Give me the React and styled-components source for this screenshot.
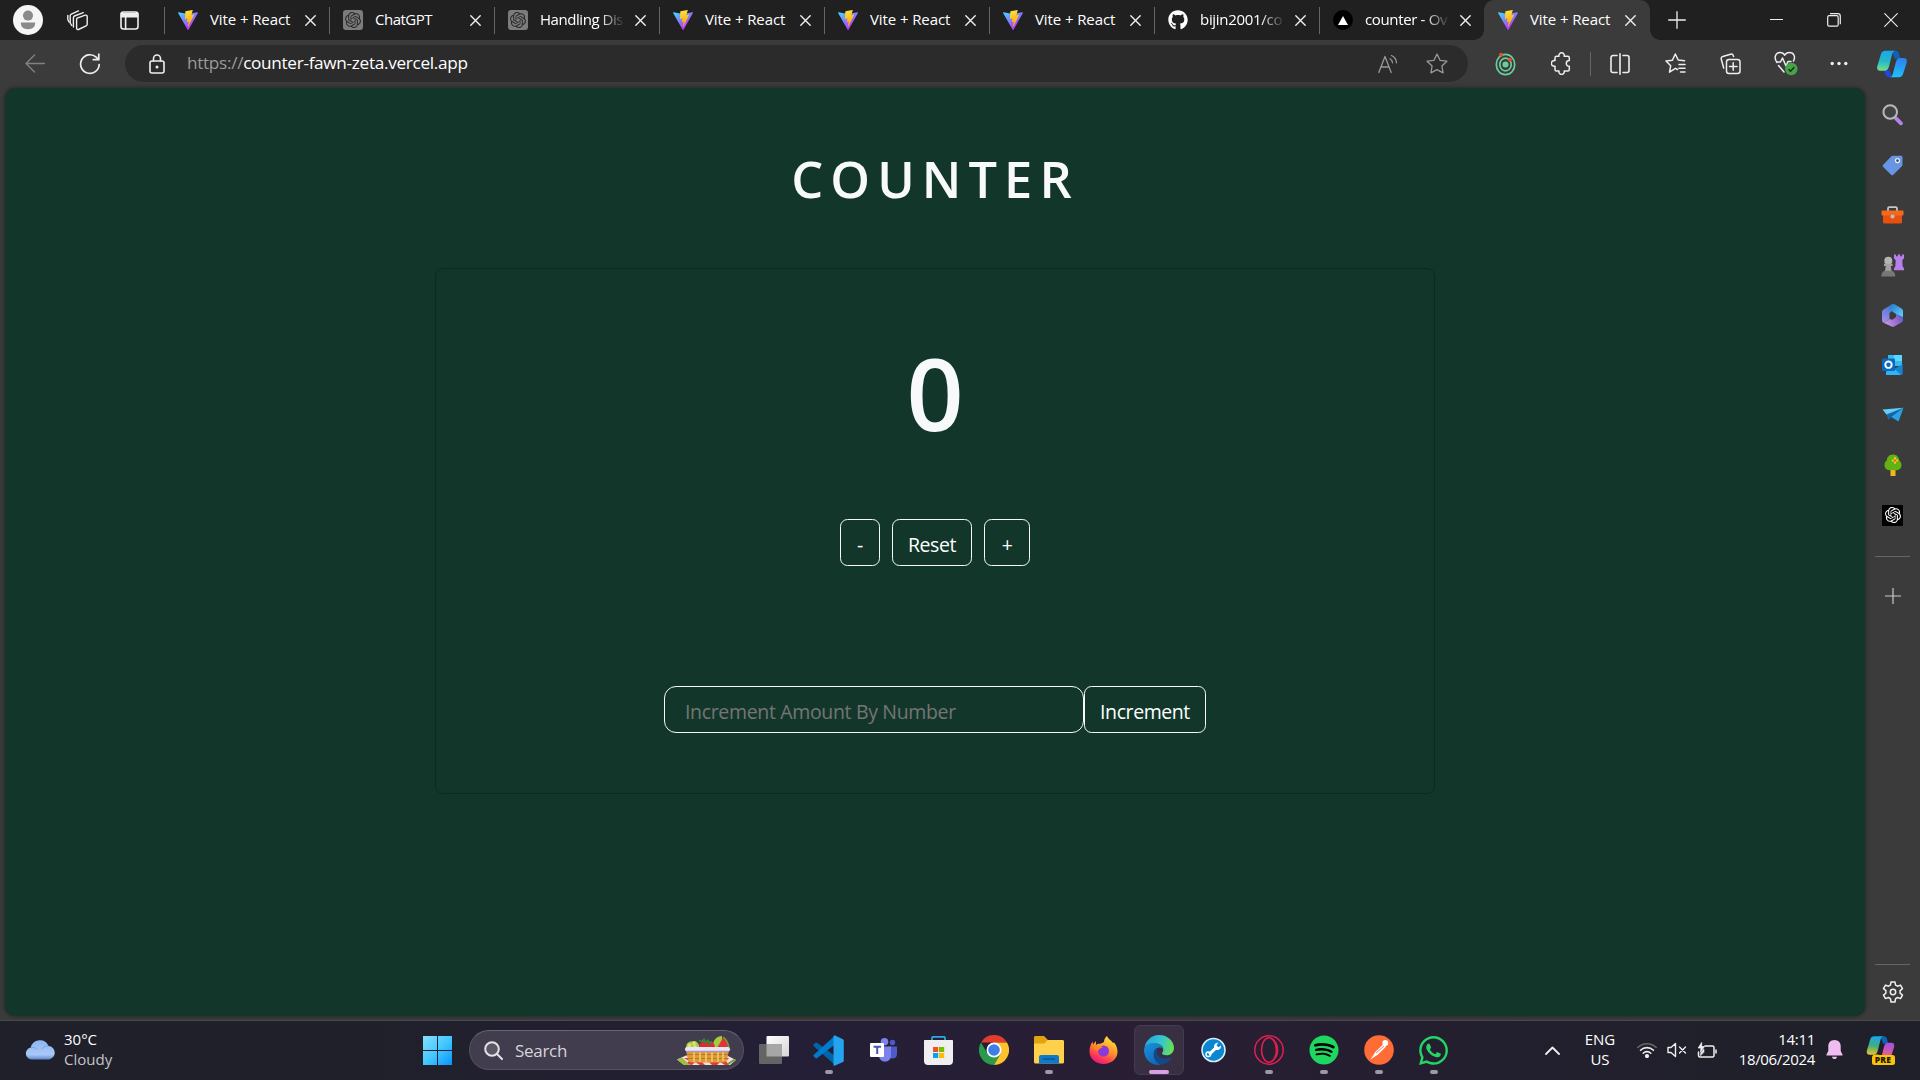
import React, { useState } from "react";
import styled, { createGlobalStyle, css } from "styled-components";
import { FaGithub, FaSpotify, FaWhatsapp } from "react-icons/fa";

const Global = createGlobalStyle`
  *, *::before, *::after { box-sizing: border-box; }
  body { margin: 0; background: #202020; overflow: hidden; }
  svg { display: block; flex: none; }
  button, input { font: inherit; color: inherit; }
`;

const Screen = styled.div`
  width: 1920px;
  height: 1080px;
  display: flex;
  flex-direction: column;
  background: #3b3b3b;
  color: #fff;
  font-family: "Open Sans", "Noto Sans", sans-serif;
`;

/* ---------- tab strip ---------- */
const TabStrip = styled.div`
  height: 40px;
  display: flex;
  background: #202020;
`;
const StripTools = styled.div`
  width: 164px;
  display: flex;
  align-items: center;
  padding-left: 13px;
`;
const Avatar = styled.div`
  width: 30px;
  height: 30px;
  margin-right: 24px;
  border-radius: 50%;
  background: #f5f5f5;
  overflow: hidden;
`;
const StripTool = styled.div`
  width: 21px;
  margin-right: ${(p) => p.$gap || 0}px;
`;
const Tab = styled.div`
  width: 165px;
  height: 40px;
  display: flex;
  align-items: center;
  padding-left: 13px;
  border-left: 1px solid transparent;
  position: relative;
  font-size: 15px;
  ${(p) =>
    p.$active
      ? css`
          width: 166px;
          background: #3b3b3b;
          border-radius: 10px 10px 0 0;
          &::before, &::after {
            content: "";
            position: absolute;
            bottom: 0;
            width: 10px;
            height: 10px;
          }
          &::before { left: -11px; background: radial-gradient(circle at 0 0, transparent 9.5px, #3b3b3b 10px); }
          &::after { right: -10px; background: radial-gradient(circle at 100% 0, transparent 9.5px, #3b3b3b 10px); }
        `
      : css`
          border-image: linear-gradient(transparent 8px, #666 8px, #666 33px, transparent 33px) 1;
        `}
`;
const TabIcon = styled.div`
  width: 20px;
  height: 20px;
  margin-right: 12px;
  border-radius: ${(p) => (p.$round ? "50%" : "3px")};
  background: ${(p) => p.$bg || "none"};
  display: grid;
  place-items: center;
`;
const TabTitle = styled.span`
  width: 86px;
  padding-bottom: 2px;
  white-space: nowrap;
  letter-spacing: ${(p) => p.$ls || 0}px;
  line-height: 24px;
  ${(p) => p.$fade && css`mask-image: linear-gradient(90deg, #000 60px, transparent 85px);`}
`;
const TabClose = styled.div`
  margin-left: 9px;
`;
const NewTab = styled.div`
  width: 54px;
  display: grid;
  place-items: center;
`;
const WindowControls = styled.div`
  flex: 1;
  display: flex;
  justify-content: flex-end;
  align-items: center;
  padding: 0 1px 1px 0;
`;
const WindowControl = styled.div`
  width: 57px;
  display: grid;
  place-items: center;
`;

/* ---------- toolbar ---------- */
const Toolbar = styled.div`
  height: 48px;
  display: flex;
  align-items: center;
  padding: 0 1px 1px 25px;
  background: #3b3b3b;
`;
const NavIcon = styled.div`
  width: ${(p) => p.$w}px;
  flex: none;
`;
const AddressBar = styled.div`
  width: 1343px;
  flex: none;
  height: 37px;
  display: flex;
  align-items: center;
  padding: 0 20px 0 24px;
  border-radius: 19px;
  background: #2b2b2b;
`;
const Url = styled.div`
  flex: 1;
  padding: 0 0 1px 22px;
  font-size: 17.2px;
  letter-spacing: -0.31px;
  line-height: 26px;
  color: #9a9a9a;
  b { font-weight: 400; color: #fff; }
`;
const AddressAction = styled.div`
  margin-left: 28px;
`;
const Extensions = styled.div`
  flex: 1;
  display: flex;
  align-items: center;
  justify-content: flex-end;
`;
const ToolIcon = styled.div`
  width: ${(p) => p.$w || 55}px;
  display: grid;
  place-items: center;
`;
const ToolSep = styled.div`
  width: 1px;
  height: 24px;
  background: #666;
`;

/* ---------- page + sidebar ---------- */
const Middle = styled.div`
  height: 933px;
  display: flex;
  padding-left: 5px;
  border-bottom: 1px solid #4a494d;
`;
const Page = styled.main`
  width: 1860px;
  height: 928px;
  display: flex;
  flex-direction: column;
  align-items: center;
  border-radius: 10px;
  background: #12372a;
  box-shadow: 0 0 4px rgba(0, 0, 0, 0.45);
`;
const Title = styled.h1`
  margin: 57px 0 0;
  height: 68px;
  line-height: 68px;
  font-size: 50.5px;
  font-weight: 600;
  letter-spacing: 7.1px;
  color: #f8f9fa;
`;
const Card = styled.section`
  width: 1000px;
  height: 526px;
  margin-top: 55px;
  display: flex;
  flex-direction: column;
  align-items: center;
  border: 1px solid #0e2a20;
  border-radius: 8px;
`;
const Count = styled.div`
  margin-top: 55px;
  height: 136px;
  line-height: 136px;
  font-size: 100px;
  font-weight: 600;
  color: #f8f9fa;
`;
const ButtonRow = styled.div`
  display: flex;
  gap: 12px;
  margin-top: 59px;
`;
const PageButton = styled.button`
  width: ${(p) => p.$w}px;
  height: 47px;
  padding: 3px 0 0;
  border: 1px solid #f8f9fa;
  border-radius: 7.5px;
  background: transparent;
  font-size: 19.5px;
  letter-spacing: -0.42px;
  white-space: nowrap;
`;
const Form = styled.div`
  display: flex;
  margin-top: 120px;
`;
const AmountInput = styled.input`
  width: 420px;
  height: 47px;
  padding: 3px 20px 0;
  border: 1px solid #f8f9fa;
  border-radius: 12px;
  background: transparent;
  font-size: 19.5px;
  letter-spacing: -0.34px;
  outline: 0;
  &::placeholder { color: #757575; opacity: 1; }
`;
const Sidebar = styled.aside`
  width: 55px;
  display: flex;
  flex-direction: column;
  align-items: center;
  padding: 2px 0 3px;
`;
const SideItem = styled.div`
  height: 50px;
  display: grid;
  place-items: center;
`;
const SideRule = styled.div`
  width: 35px;
  height: 1px;
  margin: ${(p) => p.$m};
  background: #666;
`;

/* ---------- taskbar ---------- */
const Taskbar = styled.footer`
  height: 59px;
  display: flex;
  background: linear-gradient(90deg, #20202b 0, #20202b 380px, #241f36 800px, #291e34 1150px, #221f2e 1500px, #20202b 1700px);
`;
const Weather = styled.div`
  width: 410px;
  display: flex;
  align-items: center;
  padding: 0 0 2px 25px;
  gap: 8px;
`;
const Lines = styled.div`
  display: flex;
  flex-direction: column;
  align-items: ${(p) => p.$align || "flex-start"};
  padding-bottom: ${(p) => p.$lift || 0}px;
  font-size: 15px;
  line-height: 20px;
  white-space: nowrap;
`;
const Line = styled.span`
  color: ${(p) => p.$color || "#fff"};
  letter-spacing: ${(p) => p.$ls || 0}px;
`;
const TaskCell = styled.div`
  width: 55px;
  height: 59px;
  padding-bottom: 1px;
  position: relative;
  display: grid;
  place-items: center;
`;
const ActiveCell = styled.div`
  width: 50px;
  height: 50px;
  display: grid;
  place-items: center;
  border-radius: 6px;
  border: 1px solid #443b4e;
  background: #382f43;
`;
const Indicator = styled.i`
  position: absolute;
  bottom: 6px;
  left: 50%;
  transform: translateX(-50%);
  width: ${(p) => (p.$active ? 20 : 8)}px;
  height: 4px;
  border-radius: 2px;
  background: ${(p) => (p.$active ? "#dba0e4" : "#9c98a4")};
`;
const SearchBox = styled.div`
  width: 275px;
  height: 40px;
  margin: 9px 2px 0 4px;
  display: flex;
  align-items: center;
  padding: 0 7px 0 14px;
  border-radius: 20px;
  border: 1px solid #55515f;
  border-top-color: #686472;
  background: #413d4e;
`;
const SearchLabel = styled.span`
  flex: 1;
  padding-left: 12px;
  font-size: 17px;
  color: #d6d4da;
  letter-spacing: -0.3px;
`;
const Tray = styled.div`
  flex: 1;
  display: flex;
  justify-content: flex-end;
  align-items: center;
  padding: 0 14px 1px 0;
`;
const TrayCell = styled.div`
  width: ${(p) => p.$w}px;
  margin-right: ${(p) => p.$mr || 0}px;
  display: grid;
  place-items: ${(p) => (p.$end ? "center end" : "center")};
`;
const PreCopilot = styled.div`
  position: relative;
  width: 29px;
  height: 29px;
`;
const PreBadge = styled.span`
  position: absolute;
  left: 6px;
  bottom: 0;
  width: 23px;
  height: 10px;
  border-radius: 2.5px;
  background: #fcc30b;
  color: #221c00;
  font-size: 8.5px;
  font-weight: 800;
  line-height: 10px;
  text-align: center;
  letter-spacing: 0.3px;
`;
const OpenAiTile = styled.div`
  width: 21px;
  height: 21px;
  display: grid;
  place-items: center;
  background: #000;
`;

/* ---------- icons ---------- */
const Line16 = ({ w = 20, h = 20, sw = 1.4, color = "#eee", children, vb }) => (
  <svg width={w} height={h} viewBox={vb || `0 0 ${w} ${h}`} fill="none" stroke={color} strokeWidth={sw} strokeLinecap="round" strokeLinejoin="round">
    {children}
  </svg>
);

const ViteLogo = () => (
  <svg width="20" height="20" viewBox="0 0 256 257">
    <defs>
      <linearGradient id="va" x1="0" y1="0.1" x2="0.6" y2="0.9"><stop stopColor="#41D1FF" /><stop offset="1" stopColor="#BD34FE" /></linearGradient>
      <linearGradient id="vb" x1="0.4" y1="0" x2="0.5" y2="0.9"><stop stopColor="#FFEA83" /><stop offset=".08" stopColor="#FFDD35" /><stop offset="1" stopColor="#FFA800" /></linearGradient>
    </defs>
    <path fill="url(#va)" d="M255.153 37.938L134.897 252.976c-2.483 4.44-8.862 4.466-11.382.048L.875 37.958c-2.746-4.814 1.371-10.646 6.827-9.67l120.385 21.517a6.537 6.537 0 0 0 2.322-.004l117.867-21.483c5.438-.991 9.574 4.796 6.877 9.62Z" />
    <path fill="url(#vb)" d="M185.432.063L96.44 17.501a3.268 3.268 0 0 0-2.634 3.014l-5.474 92.456a3.268 3.268 0 0 0 3.997 3.378l24.777-5.718c2.318-.535 4.413 1.507 3.936 3.838l-7.361 36.047c-.495 2.426 1.782 4.5 4.151 3.78l15.304-4.649c2.372-.72 4.652 1.36 4.15 3.788l-11.698 56.621c-.732 3.542 3.979 5.473 5.943 2.437l1.313-2.028l72.516-144.72c1.215-2.423-.88-5.186-3.54-4.672l-25.505 4.922c-2.396.462-4.435-1.77-3.759-4.114l16.646-57.705c.677-2.35-1.37-4.583-3.769-4.113Z" />
  </svg>
);
const CloseX = () => <Line16 w={11} h={11} sw={1.4}><path d="M.8.8l9.4 9.4M10.2.8L.8 10.2" /></Line16>;
const GptMark = ({ size = 16, color = "#2b2b2b" }) => (
  <svg width={size} height={size} viewBox="0 0 24 24" fill={color}>
    <path d="M22.2819 9.8211a5.9847 5.9847 0 0 0-.5157-4.9108 6.0462 6.0462 0 0 0-6.5098-2.9A6.0651 6.0651 0 0 0 4.9807 4.1818a5.9847 5.9847 0 0 0-3.9977 2.9 6.0462 6.0462 0 0 0 .7427 7.0966 5.98 5.98 0 0 0 .511 4.9107 6.051 6.051 0 0 0 6.5146 2.9001A5.9847 5.9847 0 0 0 13.2599 24a6.0557 6.0557 0 0 0 5.7718-4.2058 5.9894 5.9894 0 0 0 3.9977-2.9001 6.0557 6.0557 0 0 0-.7475-7.0729zm-9.022 12.6081a4.4755 4.4755 0 0 1-2.8764-1.0408l.1419-.0804 4.7783-2.7582a.7948.7948 0 0 0 .3927-.6813v-6.7369l2.02 1.1686a.071.071 0 0 1 .038.052v5.5826a4.504 4.504 0 0 1-4.4945 4.4944zm-9.6607-4.1254a4.4708 4.4708 0 0 1-.5346-3.0137l.142.0852 4.783 2.7582a.7712.7712 0 0 0 .7806 0l5.8428-3.3685v2.3324a.0804.0804 0 0 1-.0332.0615L9.74 19.9502a4.4992 4.4992 0 0 1-6.1408-1.6464zM2.3408 7.8956a4.485 4.485 0 0 1 2.3655-1.9728V11.6a.7664.7664 0 0 0 .3879.6765l5.8144 3.3543-2.0201 1.1685a.0757.0757 0 0 1-.071 0l-4.8303-2.7865A4.504 4.504 0 0 1 2.3408 7.872zm16.5963 3.8558L13.1038 8.364 15.1192 7.2a.0757.0757 0 0 1 .071 0l4.8303 2.7913a4.4944 4.4944 0 0 1-.6765 8.1042v-5.6772a.79.79 0 0 0-.407-.667zm2.0107-3.0231l-.142-.0852-4.7735-2.7818a.7759.7759 0 0 0-.7854 0L9.409 9.2297V6.8974a.0662.0662 0 0 1 .0284-.0615l4.8303-2.7866a4.4992 4.4992 0 0 1 6.6802 4.66zM8.3065 12.863l-2.02-1.1638a.0804.0804 0 0 1-.038-.0567V6.0742a4.4992 4.4992 0 0 1 7.3757-3.4537l-.142.0805L8.704 5.459a.7948.7948 0 0 0-.3927.6813zm1.0976-2.3654l2.602-1.4998 2.6069 1.4998v2.9994l-2.5974 1.4997-2.6067-1.4997Z" />
  </svg>
);
const PersonIcon = () => (
  <svg width="30" height="30" viewBox="0 0 30 30"><circle cx="15" cy="10.6" r="5" fill="#8a8a8a" /><path d="M7.8 17.6h14.4c0 4.6-2.6 6.7-7.2 6.7s-7.2-2.1-7.2-6.7z" fill="#8a8a8a" /></svg>
);
const WorkspacesIcon = () => (
  <Line16 w={21} h={21}>
    <path d="M10.2 8.2l8-3a1.5 1.5 0 0 1 2 1.4v7.6c0 .8-.4 1.3-1.1 1.6l-7.6 3.7a1.3 1.3 0 0 1-1.9-1.2V9.7c0-.8 0-1.2.6-1.5z" />
    <path d="M6.4 17V7.7c0-.9.4-1.4 1.1-1.7l8.8-3.4" /><path d="M4.700 15.400L3.200 13V5.800c0-.9.4-1.400 1.100-1.700L11.500.9" /><path d="M2.200 12.200L.8 9.500V5.500" />
  </Line16>
);
const TabActionsIcon = () => (
  <Line16 w={19} h={19} sw={1.6}><rect x="1" y="1" width="17" height="17" rx="2.5" /><path d="M1.5 2.5h16v3.300h-16z" fill="#eee" /><path d="M5.600 6v12" /></Line16>
);
const CopilotIcon = ({ s = 30, h = 27, id = "cp", warm }) => (
  <svg width={s} height={h} viewBox="0 0 30 27">
    <defs>
      <linearGradient id={id + "a"} x1="0.3" y1="0" x2="0.2" y2="1"><stop stopColor="#1aa7ec" /><stop offset=".5" stopColor={warm ? "#3fae7c" : "#24b8c8"} /><stop offset="1" stopColor={warm ? "#f0c528" : "#74e08a"} /></linearGradient>
      <linearGradient id={id + "b"} x1="0.6" y1="0" x2="0.4" y2="1"><stop stopColor={warm ? "#a64fe0" : "#2f7ff0"} /><stop offset="1" stopColor={warm ? "#ff6a70" : "#1cc3fa"} /></linearGradient>
    </defs>
    <path d="M15 .3h3.500c2.500 0 3.300 2 4 4.700l.8 3.300h-5.500z" fill="#0f62b8" />
    <path d="M6.800 20h6l2 6.700h-2.300c-2.700 0-3.600-1-4.300-3.400z" fill={warm ? "#f0b72a" : "#2246e0"} />
    <path d="M8.200.3h10.300c-2 0-2.900 1.700-3.600 4.300l-3 11.700c-.8 2.800-2 4-4.400 4H3.300c-2.700 0-3.700-2-3-4.600L3.800 4C4.500 1.500 6 .3 8.200.3z" fill={`url(#${id}a)`} />
    <path d="M21.800 26.700H12.500c2 0 2.900-1.700 3.600-4.300l2.800-11c.8-2.800 2-4 4.400-4h3.400c2.700 0 3.700 2 3 4.600L26.200 23c-.7 2.500-2.200 3.700-4.400 3.700z" fill={`url(#${id}b)`} />
  </svg>
);
const GearIcon = () => (
  <Line16 w={22} h={22} sw={1.5}>
    <circle cx="11" cy="11" r="2.700" />
    <path d="M9 1h4l.6 3.100 1.900 1.100 3-1.100 2 3.500-2.400 2v2.500l2.400 2-2 3.500-3-1.100-1.900 1.100L13 21H9l-.6-3.400-1.900-1.100-3 1.100-2-3.500 2.400-2V9.600l-2.400-2 2-3.500 3 1.100 1.900-1.100z" />
  </Line16>
);

const sideIcons = [
  <svg key="s" width="22" height="22" viewBox="0 0 22 22"><path d="M14 14.300l5 5" stroke="#b583e8" strokeWidth="3.800" strokeLinecap="round" /><circle cx="8.200" cy="8" r="6.800" fill="#3f4346" stroke="#b9b9b9" strokeWidth="2" /></svg>,
  <svg key="t" width="21" height="21" viewBox="0 0 21 21"><path d="M11 .8h8c.8 0 1.500.6 1.500 1.400v7.500c0 .7-.2 1.100-.7 1.600l-8.500 8.500c-.7.7-1.500.7-2.200 0L1.200 12c-.7-.7-.7-1.500 0-2.200l8-8.300c.5-.5 1-.7 1.800-.7z" fill="#6795e4" /><circle cx="15.500" cy="5.600" r="2" fill="#444" stroke="#e8eefc" strokeWidth="1.300" /></svg>,
  <svg key="b" width="23" height="18" viewBox="0 0 23 18"><path d="M7 5V2.500C7 1.700 7.500 1.200 8.300 1.200h6.400c.8 0 1.300.5 1.300 1.300V5" fill="none" stroke="#c6c6c6" strokeWidth="1.800" /><path d="M2 8h19v8c0 .8-.6 1.500-1.500 1.500h-16C2.600 17.500 2 16.800 2 16z" fill="#e8500f" /><rect x=".5" y="4.600" width="22" height="5" rx="1" fill="#f4691c" /><circle cx="11.500" cy="10.500" r="2.100" fill="#bdbdbd" /></svg>,
  <svg key="g" width="23" height="23" viewBox="0 0 23 23"><path d="M13 .5h2v1.700h1.800V.5h2.400v1.700H21V.5h2v3.800l-1.700 1.900.4 6.300 1.300 1.700v2H13v-2l1.300-1.700.4-6.300L13 4.300z" fill="#b77fe8" /><circle cx="7.300" cy="6.800" r="4" fill="#b5b5b5" /><path d="M3 9.700h8.600v2.200H9.800l.8 5.100H4L4.800 11.900H3z" fill="#a2a2a2" /><path d="M.3 22.500c0-3 1.500-5.300 3-5.700h8c1.500.4 3 2.700 3 5.700z" fill="#777" /></svg>,
  <svg key="m" width="21" height="23" viewBox="0 0 21 23"><defs><linearGradient id="m1" x1="0" y1="0" x2="1" y2="1"><stop stopColor="#2672c8" /><stop offset="1" stopColor="#63d5ff" /></linearGradient><linearGradient id="m2" x1=".6" y1="0" x2=".3" y2="1"><stop stopColor="#4a78d8" /><stop offset="1" stopColor="#a78be6" /></linearGradient><linearGradient id="m3" x1="0" y1=".6" x2="1" y2=".3"><stop stopColor="#c79be8" /><stop offset=".6" stopColor="#9a6ad0" /><stop offset="1" stopColor="#5b5fc7" /></linearGradient></defs><path d="M10 .3L1.500 5.500C.5 6.200 0 7 0 8v8c0 1.500.8 2.500 2 3l5.500-4V9l2-2z" fill="url(#m2)" /><path d="M21 13v3c0 1-.5 1.800-1.300 2.300l-7 4c-1.300.7-2.500.7-3.700 0L2 19l5.500-4 3 .8L14 13v-3z" fill="url(#m3)" /><path d="M10 .3c1-.4 2-.3 3 .2l6.500 4c1 .7 1.500 1.500 1.500 2.500v6L14 10 9.500 7l-2 2V4c0-2 1-3 2.500-3.700z" fill="url(#m1)" /></svg>,
  <svg key="o" width="21" height="20" viewBox="0 0 21 20"><path d="M6 0h14v11H6z" fill="#39b8ee" /><path d="M12 0h8v6h-8z" fill="#56d8ff" /><path d="M4 10l8 4 8.700-5v9.500c0 .8-.5 1.300-1.200 1.300H5c-.7 0-1-.5-1-1z" fill="#1583cf" /><path d="M4 17l7-4.500L19 20H5c-.6 0-1-.4-1-1z" fill="#33b4f1" /><rect x="0" y="3.500" width="13" height="12.500" rx="1.200" fill="#0869c3" /><circle cx="6.500" cy="9.700" r="3.200" fill="none" stroke="#fff" strokeWidth="1.900" /></svg>,
  <svg key="p" width="22" height="16" viewBox="0 0 22 16"><path d="M.5 2.500L21.500.8 6 9.500z" fill="#65cdf5" /><path d="M6 9.300L21.500.8 16.500 14.500 9.200 10z" fill="#2aa2e6" /><path d="M4.500 7.500l1.800 5.800L9.200 10 21.500.8z" fill="#1364a8" /></svg>,
  <svg key="r" width="18" height="22" viewBox="0 0 18 22"><rect x="6.500" y="14" width="5" height="8" fill="#f5b51e" /><path d="M9 .5c4 0 6 3 6.300 6 1.500 1 2.200 2.800 2.200 4.500 0 3-2 5.200-5 5.200h-7c-3 0-5-2.200-5-5.200 0-1.700.7-3.500 2.200-4.500C3 3.500 5 .5 9 .5z" fill="#61b314" /><path d="M11 4.200v4.600M8.700 6.500h4.600" stroke="#ffc52b" strokeWidth="2.200" strokeLinecap="round" /><circle cx="11" cy="6.500" r="1.200" fill="#e8662a" /></svg>,
];

const CloudIcon = () => (
  <svg width="31" height="20" viewBox="0 0 31 20"><defs><linearGradient id="cl" x1="0" y1="0" x2="0" y2="1"><stop stopColor="#8fb6f2" /><stop offset=".75" stopColor="#a9c8f6" /><stop offset="1" stopColor="#5f86cf" /></linearGradient></defs><path d="M6.500 19.500A6 6 0 0 1 5.800 7.600 9.300 9.300 0 0 1 23.500 6a6.800 6.800 0 0 1 .5 13.500z" fill="url(#cl)" /><path d="M6 7.800c3-.8 5 .2 6 1.700M17 9c1.500-2.500 4-3.300 6.500-3" stroke="#7ba2e8" strokeWidth="1" fill="none" /></svg>
);
const WindowsIcon = () => (
  <svg width="29" height="29" viewBox="0 0 29 29"><defs><linearGradient id="wn" x1="0" y1="0" x2="29" y2="29" gradientUnits="userSpaceOnUse"><stop stopColor="#86e0fc" /><stop offset=".5" stopColor="#45c8ff" /><stop offset="1" stopColor="#0894fb" /></linearGradient></defs><path fill="url(#wn)" d="M0 0h14v14H0zM15 0h14v14H15zM0 15h14v14H0zM15 15h14v14H15z" /></svg>
);
const BasketIcon = () => (
  <svg width="59" height="31" viewBox="0 0 59 31">
    <path d="M0 24.500l9-4h41l9 4.500-6 5H7z" fill="#f6dcda" />
    <path d="M7 23l5 3-3 3 6 1 3-3 5 3h5l-3-3h7l3 3h5l3-3 5 3h4l-3-4 3-3z" fill="#e2383f" />
    <path d="M0 24.500l5-2 8 7.500H7z" fill="#9cc03c" /><path d="M51 30l8-5-2-1-7 4.500z" fill="#6fa03a" />
    <path d="M9 13c0-5 3-7 6-6.500 3-1.500 6 .5 7 3.500l1 3z" fill="#a9c840" /><circle cx="12.500" cy="10.500" r="2" fill="#d3e27c" /><circle cx="17" cy="8.500" r="2" fill="#cfe070" /><circle cx="18" cy="12" r="1.800" fill="#dbe88e" />
    <path d="M36 13c-1-7 3-12 9-12l1 12z" fill="#a6cb3f" /><path d="M40 13L46.500 2c3 3 5.500 7 5.500 11z" fill="#e0343d" /><path d="M46.500 1.500C50 4 52.500 8.500 52.500 13H51c0-4-2-8-5-10.500z" fill="#68a93b" />
    <path d="M22 13c0-6 5-8 8-6 4-2 8 1 8 6z" fill="#d92d33" /><path d="M22 5.500l3 1 2-2 1 3 3-2 1 3 3-2" stroke="#3c8437" strokeWidth="1.800" fill="none" />
    <path d="M9 15h43l-2 10c-.5 1.500-1.500 2.500-4 2.500H15c-2.500 0-3.500-1-4-2.500z" fill="#dd9a35" /><path d="M10 19.500h41M11 23.500h39" stroke="#b97728" strokeWidth="1" /><path d="M17 17v10M23 17v10M29 17v10M35 17v10M41 17v10M46 17v9" stroke="#eebd5c" strokeWidth="2" />
    <rect x="8" y="12" width="45" height="4.500" rx="2.200" fill="#ece4f2" /><path d="M9 16.500h43" stroke="#a994c8" strokeWidth="1.400" />
  </svg>
);

const apps = [
  { id: "view", icon: <svg width="30" height="28" viewBox="0 0 30 28"><defs><linearGradient id="tv" x1="0" y1="0" x2="1" y2="1"><stop stopColor="#fff" /><stop offset="1" stopColor="#d5d5d5" /></linearGradient></defs><rect x="7.500" width="22.500" height="20.500" rx="1" fill="url(#tv)" /><rect y="8" width="23" height="20" rx="1" fill="#646464" /><path d="M7.500 8H23v12.500H7.500z" fill="#a6a6a6" /></svg> },
  { id: "code", dot: 1, icon: <svg width="31" height="31" viewBox="0 0 31 31"><path d="M22 30.500L.8 11.800c-.6-.6-.6-1.300 0-1.900l1.700-1.500c.5-.5 1.100-.5 1.700 0L28 26z" fill="#0065a9" transform="translate(0,-.6)" /><path d="M22 .5L.8 19.700c-.6.6-.6 1.300 0 1.900l1.700 1.500c.5.5 1.100.5 1.700 0L28 5z" fill="#007acc" /><path d="M22 .5l7.500 3.400c.9.500 1.300 1 1.300 2v19.300c0 1-.4 1.600-1.300 2L22 30.600c-1 .3-1.500-.2-1.500-1.200V1.700c0-1 .5-1.500 1.500-1.200z" fill="#24a3ee" /></svg> },
  { id: "teams", icon: <svg width="27" height="24" viewBox="0 0 27 24"><circle cx="22.500" cy="4.500" r="2.700" fill="#5059c9" /><path d="M18 8.500h9V16c0 3-2 4.500-4.500 4.500S18 19 18 16z" fill="#5059c9" /><circle cx="14.500" cy="3.800" r="3.800" fill="#7b83eb" /><path d="M9 8.500h12v8.700c0 4-2.500 6.300-6 6.300s-6-2.300-6-6.300z" fill="#7b83eb" /><rect y="5" width="14" height="14" rx="1" fill="#fff" /><path d="M3.500 8.700H11M7.200 9v7" stroke="#4b53bc" strokeWidth="2" fill="none" /></svg> },
  { id: "store", icon: <svg width="29" height="29" viewBox="0 0 29 29"><path d="M8 6V2c0-.7.5-1.200 1.200-1.200h10.600c.7 0 1.200.5 1.200 1.200v4" stroke="#29abe8" strokeWidth="1.700" fill="none" /><path d="M0 5c0-.6.4-1 1-1h27c.6 0 1 .4 1 1v20c0 2.500-1.500 4-4 4H4c-2.500 0-4-1.500-4-4z" fill="#efefef" /><path fill="#f25022" d="M9 11h5.200v5H9z" /><path fill="#7fba00" d="M15 11h5.200v5H15z" /><path fill="#00a4ef" d="M9 17h5.200v5H9z" /><path fill="#ffb900" d="M15 17h5.200v5H15z" /></svg> },
  { id: "chrome", icon: <svg width="30" height="30" viewBox="0 0 30 30"><path d="M2 7.500A15 15 0 0 1 28 7.500H15z" fill="#e33b2e" /><path d="M2 7.500A15 15 0 0 0 15 30l6.500-11.200L8.500 18.700z" fill="#2a9b4a" /><path d="M28 7.500A15 15 0 0 1 15 30l6.500-11.200L15 7.500z" fill="#fdc32c" /><circle cx="15" cy="15" r="7.500" fill="#fff" /><circle cx="15" cy="15" r="5.800" fill="#3d7fe6" /></svg> },
  { id: "files", dot: 1, icon: <svg width="30" height="28" viewBox="0 0 30 28"><path d="M0 1.500C0 .6.6 0 1.500 0H9c1 0 1.500.3 2 .9L14 4v4H0z" fill="#dfa40f" /><path d="M0 7.500h10.500L13.500 4h15c.9 0 1.500.6 1.500 1.500V26c0 .9-.6 1.500-1.500 1.500h-27C.6 27.500 0 26.900 0 26z" fill="#ffd04a" /><path d="M5 27.500V21c0-1.200.8-2 2-2h16c1.200 0 2 .8 2 2v6.500z" fill="#0c79cc" /><path d="M9 23h12" stroke="#0a4f8c" strokeWidth="1.300" /></svg> },
  { id: "firefox", icon: <svg width="29" height="30" viewBox="0 0 29 30"><defs><linearGradient id="ff" x1=".8" y1="0" x2=".3" y2="1"><stop stopColor="#ffe93d" /><stop offset=".45" stopColor="#ff9a2a" /><stop offset=".8" stopColor="#ff3653" /><stop offset="1" stopColor="#e3168c" /></linearGradient></defs><path d="M18 1c1 3 4 4 5.500 6.500 1-.2 1.500 0 2 .5 2 2.500 3 5.500 3 9C28.500 24 22 29 14.500 29 7 29 .5 24 .5 16.500c0-4 1-7 3-10l.5 3L7 6v4c1-1 3-1.500 4.500-1.200L15 7c0-2.500 1-4.500 3-6z" fill="url(#ff)" /><circle cx="14.500" cy="16" r="5.500" fill="#8a3ad8" /><path d="M6 10.500c2 1.500 5-.5 7.500 1.500-1 1.500-4 1.500-4.500 4C5 15 5 12 6 10.500z" fill="#ff8a1f" /></svg> },
  { id: "edge", dot: 2, icon: <svg width="30" height="30" viewBox="0 0 30 30"><defs><linearGradient id="e1" x1="0" y1=".3" x2="1" y2=".5"><stop stopColor="#26a6e2" /><stop offset=".55" stopColor="#36c6cf" /><stop offset="1" stopColor="#68e04f" /></linearGradient><linearGradient id="e2" x1="0" y1="0" x2=".6" y2="1"><stop stopColor="#1b92dc" /><stop offset="1" stopColor="#1066b8" /></linearGradient></defs><path d="M.5 12.500C1.800 5.500 7.500 0 15 0c9 0 15 6.500 15 13 0 4.500-3.500 7.300-7.300 7.300-3 0-4.700-1-4.700-2 0-.8 1.300-1.300 1.300-3.800 0-3.500-3.600-6-7.800-6C6.500 8.500 2.500 10 .5 12.500z" fill="url(#e1)" /><path d="M0 15C.5 10 5 7.800 10 8c5.500.3 9 3 9 6-1.500-2-6-2.200-8 1-2.500 4-1.500 11 5.500 14.800C7 31 0 24 0 15z" fill="url(#e2)" /><path d="M11 14.500c-2.500 5.500.5 13.500 6.500 15.300 4-.5 7.800-3 9.800-6.300.4-.7-.2-1.200-.9-.8-3.400 1.600-9.900 1.300-12.400-2.700-1.200-1.900-1.300-3.900-.3-6z" fill="#114a8b" /></svg> },
  { id: "wrench", icon: <svg width="25" height="26" viewBox="0 0 25 26"><circle cx="12.500" cy="13" r="11.500" fill="#0b87cf" stroke="#d9eefa" strokeWidth="1.600" /><path d="M8.200 17.300l8.300-8" stroke="#fff" strokeWidth="3" /><circle cx="7.300" cy="17.300" r="2.300" fill="none" stroke="#fff" strokeWidth="1.500" /><path d="M20 8.500l-3 2-1.800-1.700 2-3c-3 0-4.700 2.200-4 5l2.200 2.200c2.700.4 5-1.500 4.600-4.500z" fill="#fff" /></svg> },
  { id: "opera", dot: 1, icon: <svg width="30" height="30" viewBox="0 0 30 30" fill="none" stroke="#e01f4f"><circle cx="15" cy="15" r="14.200" strokeWidth="1.500" /><ellipse cx="15" cy="15" rx="7.500" ry="12.200" strokeWidth="1.600" /><path d="M17 3a14 14 0 0 1 0 24M20 6.500c4 4 4 13 0 17" strokeWidth="1.100" /></svg> },
  { id: "spotify", dot: 1, icon: <svg width="30" height="30" viewBox="0 0 30 30"><circle cx="15" cy="15" r="12" fill="#000" /><g><FaSpotify size={30} color="#1ed760" /></g></svg> },
  { id: "postman", dot: 1, icon: <svg width="30" height="30" viewBox="0 0 30 30"><circle cx="15" cy="15" r="14.800" fill="#ff6c37" /><path d="M6.500 24.500l5-7.800L19 9.500l3 2.300-8 7.700z" fill="#fff" /><circle cx="21.300" cy="8" r="2.900" fill="#fff" /><path d="M12 18l8-7" stroke="#ff6c37" strokeWidth=".9" /></svg> },
  { id: "whatsapp", dot: 1, icon: <FaWhatsapp size={33} color="#25d366" /> },
];

const tabs = [
  { t: "Vite + React", k: "vite", ls: -0.1 },
  { t: "ChatGPT", k: "gpt", ls: -0.5 },
  { t: "Handling Dis", k: "gpt", ls: -0.45, fade: 1 },
  { t: "Vite + React", k: "vite", ls: -0.1 },
  { t: "Vite + React", k: "vite", ls: -0.1 },
  { t: "Vite + React", k: "vite", ls: -0.1 },
  { t: "bijin2001/co", k: "git", ls: -0.3, fade: 1 },
  { t: "counter - Ov", k: "vercel", ls: -0.35, fade: 1 },
  { t: "Vite + React", k: "vite", ls: -0.1, active: 1 },
];
const favicons = {
  vite: <TabIcon><ViteLogo /></TabIcon>,
  gpt: <TabIcon $bg="#7c7c7c"><GptMark size={16} /></TabIcon>,
  git: <TabIcon><FaGithub size={20} color="#fff" /></TabIcon>,
  vercel: <TabIcon $bg="#000" $round><svg width="10" height="9" viewBox="0 0 10 9"><path d="M5 0l5 9H0z" fill="#fff" /></svg></TabIcon>,
};

export default function App() {
  const [count, setCount] = useState(0);
  const [amount, setAmount] = useState("");
  return (
    <Screen>
      <Global />
      <TabStrip>
        <StripTools>
          <Avatar><PersonIcon /></Avatar>
          <StripTool $gap={32}><WorkspacesIcon /></StripTool>
          <StripTool><TabActionsIcon /></StripTool>
        </StripTools>
        {tabs.map((tab, i) => (
          <Tab key={i} $active={tab.active}>
            {favicons[tab.k]}
            <TabTitle $ls={tab.ls} $fade={tab.fade}>{tab.t}</TabTitle>
            <TabClose><CloseX /></TabClose>
          </Tab>
        ))}
        <NewTab><Line16 w={18} h={18} sw={1.3}><path d="M9 .7v16.600M.7 9h16.600" /></Line16></NewTab>
        <WindowControls>
          <WindowControl><Line16 w={13} h={13} sw={1.2}><path d="M.5 6.500h12" /></Line16></WindowControl>
          <WindowControl><Line16 w={14} h={14} sw={1.2}><rect x=".7" y="2.700" width="10.500" height="10.500" rx="1.500" /><path d="M3.500.7h7.300c1.500 0 2.500 1 2.500 2.500v7.500" /></Line16></WindowControl>
          <WindowControl><Line16 w={14} h={14} sw={1.1}><path d="M.7.7l12.600 12.600M13.300.7L.7 13.300" /></Line16></WindowControl>
        </WindowControls>
      </TabStrip>

      <Toolbar>
        <NavIcon $w={54}><Line16 w={20} h={19} color="#828282"><path d="M19.500 9.500H1M9.500 1L1 9.500 9.500 18" /></Line16></NavIcon>
        <NavIcon $w={46}><Line16 w={22} h={22} sw={1.7}><path d="M20.200 11.500a9.300 9.300 0 1 1-3-7.300l2.300 2.300M19.800 1.200v5.500h-5.500" /></Line16></NavIcon>
        <AddressBar>
          <Line16 w={16} h={20} sw={1.6}><rect x="1" y="7" width="14" height="12" rx="2" /><path d="M4.500 7V4.500a3.500 3.500 0 0 1 7 0V7" /><circle cx="8" cy="13" r=".7" fill="#eee" /></Line16>
          <Url>https://<b>counter-fawn-zeta.vercel.app</b></Url>
          <AddressAction><Line16 w={20} h={20} color="#999" sw={1.3}><path d="M.8 18.500L7 2.500l6.200 16M3 13h8M12 4.800c1.800 1 2.500 2.200 2.500 4M13.500 1.500c3.500 1.800 5 4 5 7.300" /></Line16></AddressAction>
          <AddressAction><Line16 w={22} h={21} color="#999" sw={1.3}><path d="M11 1l3 6.300 6.900.9-5 4.800 1.200 6.900L11 16.600l-6.100 3.300L6.100 13l-5-4.800L8 7.300z" /></Line16></AddressAction>
        </AddressBar>
        <Extensions>
          <ToolIcon>
            <Line16 w={21} h={24} vb="0 0 21 24" color="#68cf9a" sw={1.7}><ellipse cx="10.500" cy="12.500" rx="9.200" ry="10.200" /><ellipse cx="10.500" cy="12.500" rx="5.700" ry="6.300" /><circle cx="10.500" cy="12.500" r="2.200" fill="#68cf9a" /><circle cx="6" cy="2.700" r="2" fill="#e9502a" stroke="none" /><circle cx="14.800" cy="7.800" r="2" fill="#e9502a" stroke="none" /></Line16>
          </ToolIcon>
          <ToolIcon $w={57}>
            <Line16 w={21} h={23} sw={1.5}><path d="M8 4.200a2.700 2.700 0 1 1 5.200 0h3.600c.9 0 1.500.6 1.500 1.500v2.800c-4 0-4 5.800 0 5.800v3.200c0 .9-.6 1.500-1.500 1.500h-3.600a2.700 2.700 0 1 1-5.200 0H5.500c-.9 0-1.500-.6-1.500-1.500v-3.300a2.900 2.900 0 1 1 0-5.600V5.700c0-.9.6-1.500 1.500-1.500z" /></Line16>
          </ToolIcon>
          <ToolSep />
          <ToolIcon $w={57}><Line16 w={20} h={22} sw={1.6}><path d="M7 2.500H3A2 2 0 0 0 1 4.500v13a2 2 0 0 0 2 2h4M13 2.500h4a2 2 0 0 1 2 2v13a2 2 0 0 1-2 2h-4M10 .8v20.400" /></Line16></ToolIcon>
          <ToolIcon><Line16 w={21} h={21} sw={1.5}><path d="M12.500 16.500l-2-1.200-6 3.900 1.200-6.500L1 8l6.400-.8L10.300 1l2.900 6 6.300.8M14 11.500h6M14 15.200h6M15.500 19h4.500" /></Line16></ToolIcon>
          <ToolIcon><Line16 w={21} h={22} sw={1.5}><rect x="6.500" y="6.500" width="13.500" height="14" rx="2.500" /><path d="M13.200 9.800v7.400M9.500 13.500h7.500M3.700 15L1.300 6.300C.9 5 1.500 3.800 2.800 3.500l7.700-2.300c1.300-.4 2.400.2 2.800 1.500l.3.800" /></Line16></ToolIcon>
          <ToolIcon>
            <svg width="24" height="25" viewBox="0 0 24 25"><path d="M3 11.500C-.5 7 1.500 1.500 6 1.500c2.500 0 4 1.300 4.700 2.700C11.500 2.800 13 1.500 15.500 1.500c4.500 0 6.200 4.700 4 8.500M4.500 14.500l5.500 6.500M2.500 11h4l2-4 3.500 8 2-4.500h3" fill="none" stroke="#eee" strokeWidth="1.500" strokeLinecap="round" strokeLinejoin="round" /><circle cx="17.300" cy="18" r="6.200" fill="#45a546" /><path d="M14.500 18.200l2 2 3.800-4" fill="none" stroke="#222" strokeWidth="1.400" /></svg>
          </ToolIcon>
          <ToolIcon $w={52}><svg width="18" height="5" viewBox="0 0 18 5" fill="#eee"><circle cx="2.200" cy="2.500" r="1.700" /><circle cx="9" cy="2.500" r="1.700" /><circle cx="15.800" cy="2.500" r="1.700" /></svg></ToolIcon>
          <ToolIcon $w={54}><CopilotIcon h={28} /></ToolIcon>
        </Extensions>
      </Toolbar>

      <Middle>
        <Page>
          <Title>COUNTER</Title>
          <Card>
            <Count>{count}</Count>
            <ButtonRow>
              <PageButton $w={40} onClick={() => setCount(count - 1)}>-</PageButton>
              <PageButton $w={80} onClick={() => setCount(0)}>Reset</PageButton>
              <PageButton $w={46} onClick={() => setCount(count + 1)}>+</PageButton>
            </ButtonRow>
            <Form>
              <AmountInput placeholder="Increment Amount By Number" value={amount} onChange={(e) => setAmount(e.target.value)} />
              <PageButton $w={122} onClick={() => setCount(count + (Number(amount) || 0))}>Increment</PageButton>
            </Form>
          </Card>
        </Page>
        <Sidebar>
          {sideIcons.map((icon, i) => <SideItem key={i}>{icon}</SideItem>)}
          <SideItem><OpenAiTile><GptMark size={16} color="#fff" /></OpenAiTile></SideItem>
          <SideRule $m="16px 0 14px" />
          <SideItem><Line16 w={16} h={16} sw={1.2} color="#ccc"><path d="M8 .5v15M.5 8h15" /></Line16></SideItem>
          <SideRule $m="auto 0 2px" />
          <SideItem><GearIcon /></SideItem>
        </Sidebar>
      </Middle>

      <Taskbar>
        <Weather>
          <CloudIcon />
          <Lines $lift={1}><Line>30°C</Line><Line $color="#c4c4c8">Cloudy</Line></Lines>
        </Weather>
        <TaskCell><WindowsIcon /></TaskCell>
        <SearchBox>
          <Line16 w={19} h={19} sw={2} color="#e4e4e8"><circle cx="8" cy="8" r="6.800" fill="#5b5766" /><path d="M13 13l5 5" /></Line16>
          <SearchLabel>Search</SearchLabel>
          <BasketIcon />
        </SearchBox>
        {apps.map((a) => (
          <TaskCell key={a.id}>
            {a.dot === 2 ? <ActiveCell>{a.icon}</ActiveCell> : a.icon}
            {a.dot && <Indicator $active={a.dot === 2} />}
          </TaskCell>
        ))}
        <Tray>
          <TrayCell $w={40}><Line16 w={15} h={9} sw={1.8}><path d="M1 8l6.500-6.500L14 8" /></Line16></TrayCell>
          <TrayCell $w={56} $mr={4}><Lines $align="center" $lift={2}><Line>ENG</Line><Line>US</Line></Lines></TrayCell>
          <TrayCell $w={30}>
            <Line16 w={20} h={16} sw={1.6}><path d="M.8 5.500a13 13 0 0 1 18.400 0" stroke="#66656e" /><path d="M3.500 8.300a9.300 9.300 0 0 1 13 0M6.200 11.200a5.400 5.400 0 0 1 7.600 0" /><circle cx="10" cy="14" r="1.300" fill="#eee" /></Line16>
          </TrayCell>
          <TrayCell $w={30}><Line16 w={20} h={16} sw={1.4}><path d="M1 5.500h3L8.500 1.500v13L4 10.500H1zM12.500 5l6 6M18.500 5l-6 6" /></Line16></TrayCell>
          <TrayCell $w={30}><Line16 w={21} h={17} sw={1.5}><path d="M8 4h7.500A1.500 1.500 0 0 1 17 5.500v8a1.500 1.500 0 0 1-1.500 1.500H3a1.500 1.500 0 0 1-1.500-1.500V10M19 8v3" /><path d="M4.500.8L1.200 6H4l-.5 4 4-5.500H5z" fill="#eee" strokeWidth=".8" /><path d="M3.500 13.500V11l3.500-4v3z" fill="#eee" strokeWidth=".5" /></Line16></TrayCell>
          <TrayCell $w={93} $end><Lines $align="flex-end" $lift={2}><Line $ls={-0.3}>14:11</Line><Line $ls={-0.33}>18/06/2024</Line></Lines></TrayCell>
          <TrayCell $w={39}><svg width="17" height="20" viewBox="0 0 17 20" fill="#efbdf0"><path d="M8.500 0c4 0 6.200 2.800 6.200 6.300V11l1.800 3.500c.2.500 0 1-.6 1H1.100c-.6 0-.8-.5-.6-1L2.300 11V6.300C2.300 2.800 4.500 0 8.500 0zM6 16.800h5c-.3 1.500-1.200 2.300-2.500 2.300S6.300 18.300 6 16.800z" /></svg></TrayCell>
          <TrayCell $w={52}><PreCopilot><CopilotIcon s={29} h={25} id="cq" warm /><PreBadge>PRE</PreBadge></PreCopilot></TrayCell>
        </Tray>
      </Taskbar>
    </Screen>
  );
}
